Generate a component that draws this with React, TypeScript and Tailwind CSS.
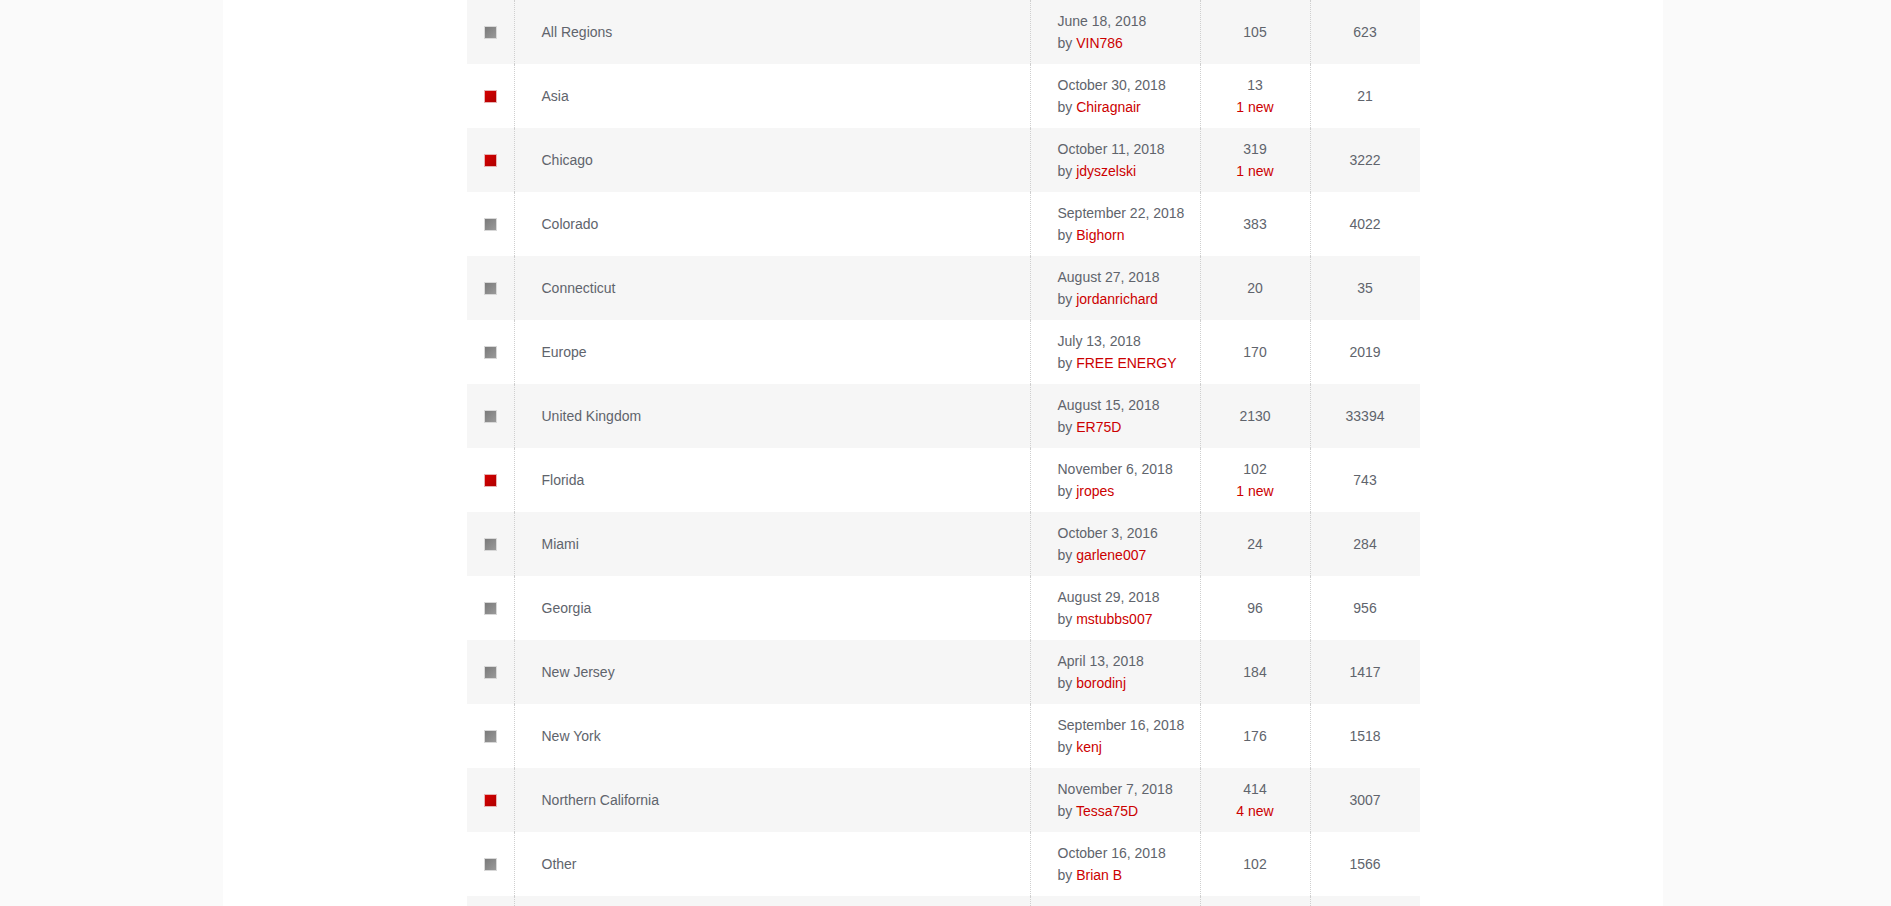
type Row = {
  name: string;
  date: string;
  by: string;
  topics: string;
  posts: string;
  unread?: boolean;
  fresh?: string;
};

const rows: Row[] = [
  { name: "All Regions", date: "June 18, 2018", by: "VIN786", topics: "105", posts: "623" },
  { name: "Asia", date: "October 30, 2018", by: "Chiragnair", topics: "13", posts: "21", unread: true, fresh: "1 new" },
  { name: "Chicago", date: "October 11, 2018", by: "jdyszelski", topics: "319", posts: "3222", unread: true, fresh: "1 new" },
  { name: "Colorado", date: "September 22, 2018", by: "Bighorn", topics: "383", posts: "4022" },
  { name: "Connecticut", date: "August 27, 2018", by: "jordanrichard", topics: "20", posts: "35" },
  { name: "Europe", date: "July 13, 2018", by: "FREE ENERGY", topics: "170", posts: "2019" },
  { name: "United Kingdom", date: "August 15, 2018", by: "ER75D", topics: "2130", posts: "33394" },
  { name: "Florida", date: "November 6, 2018", by: "jropes", topics: "102", posts: "743", unread: true, fresh: "1 new" },
  { name: "Miami", date: "October 3, 2016", by: "garlene007", topics: "24", posts: "284" },
  { name: "Georgia", date: "August 29, 2018", by: "mstubbs007", topics: "96", posts: "956" },
  { name: "New Jersey", date: "April 13, 2018", by: "borodinj", topics: "184", posts: "1417" },
  { name: "New York", date: "September 16, 2018", by: "kenj", topics: "176", posts: "1518" },
  { name: "Northern California", date: "November 7, 2018", by: "Tessa75D", topics: "414", posts: "3007", unread: true, fresh: "4 new" },
  { name: "Other", date: "October 16, 2018", by: "Brian B", topics: "102", posts: "1566" },
];

const cell = "border-l border-dotted border-[#cfcfcf]";

function Marker({ unread }: { unread?: boolean }) {
  return (
    <span
      className={
        unread
          ? "block w-[13px] h-[13px] border border-[#e6b3b3] bg-gradient-to-br from-[#d40000] to-[#b00000]"
          : "block w-[13px] h-[13px] border border-[#d8d8d8] bg-gradient-to-br from-[#7a7a7a] to-[#9a9a9a]"
      }
    />
  );
}

export default function App() {
  return (
    <div
      className="min-h-screen bg-[#fafafa] text-[14px] text-[#60646c]"
      style={{ fontFamily: '"Liberation Sans", Arial, sans-serif' }}
    >
      <div className="ml-[223px] w-[1440px] min-h-screen bg-white">
        <div className="mx-auto w-[953px]">
          {rows.map((r, i) => (
            <div
              key={r.name}
              className={`flex h-[64px] ${i % 2 === 0 ? "bg-[#f6f6f6]" : "bg-white"}`}
            >
              <div className="flex w-[47px] items-center justify-center">
                <Marker unread={r.unread} />
              </div>
              <div className={`flex w-[516px] items-center pl-[27px] ${cell}`}>
                {r.name}
              </div>
              <div className={`flex w-[170px] flex-col justify-center pl-[27px] leading-[22px] ${cell}`}>
                <span>{r.date}</span>
                <span>
                  by <span className="text-[#cc0000]">{r.by}</span>
                </span>
              </div>
              <div className={`flex w-[110px] flex-col items-center justify-center leading-[22px] ${cell}`}>
                <span>{r.topics}</span>
                {r.fresh && <span className="text-[#cc0000]">{r.fresh}</span>}
              </div>
              <div className={`flex w-[110px] items-center justify-center ${cell}`}>
                {r.posts}
              </div>
            </div>
          ))}
          {/* next row, scrolled out of view */}
          <div className="flex h-[64px] bg-[#f6f6f6]">
            <div className="w-[47px]" />
            <div className={`w-[516px] ${cell}`} />
            <div className={`w-[170px] ${cell}`} />
            <div className={`w-[110px] ${cell}`} />
            <div className={`w-[110px] ${cell}`} />
          </div>
        </div>
      </div>
    </div>
  );
}
